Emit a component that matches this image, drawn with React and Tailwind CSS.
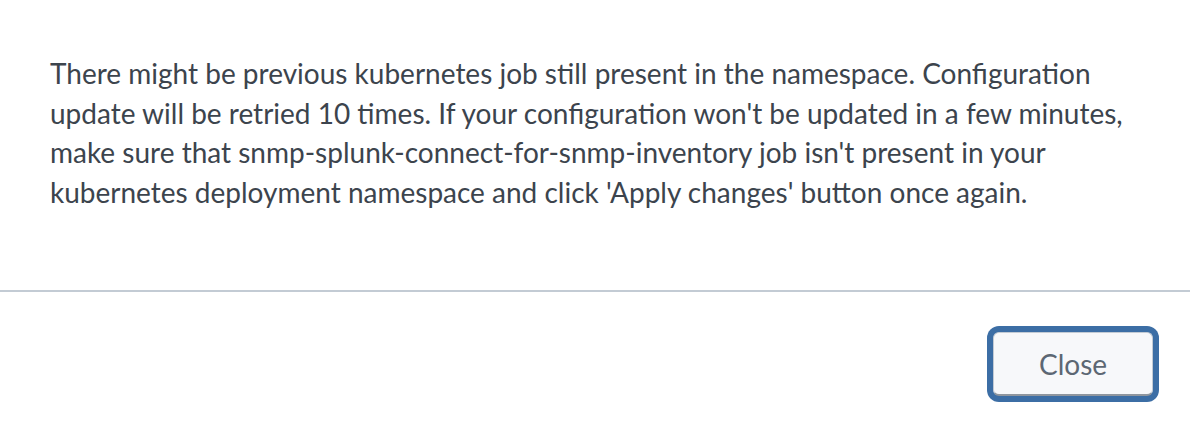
import React from 'react'

const LINES = [
  'There might be previous kubernetes job still present in the namespace. Configuration',
  "update will be retried 10 times. If your configuration won't be updated in a few minutes,",
  "make sure that snmp-splunk-connect-for-snmp-inventory job isn't present in your",
  "kubernetes deployment namespace and click 'Apply changes' button once again.",
]

export default function App() {
  return (
    <div
      className="w-[1190px] h-[430px] bg-white flex flex-col overflow-hidden"
      style={{ fontFamily: 'Lato, "Open Sans", sans-serif' }}
    >
      {/* Body */}
      <div className="h-[290px] pl-[50px] pt-[54px]">
        <p className="text-[28px] leading-[39.5px] text-[#3c444d] whitespace-nowrap">
          {LINES.map((l, i) => (
            <React.Fragment key={i}>
              {l}
              {i < LINES.length - 1 && <br />}
            </React.Fragment>
          ))}
        </p>
      </div>

      {/* Divider */}
      <div className="h-[2px] bg-[#c3cbd4]" />

      {/* Footer */}
      <div className="flex justify-end pr-[37px] pt-[40px]">
        <button
          className="w-[160px] h-[64px] rounded-[6px] bg-[#f7f8fa] border border-[#c3cbd4] border-b-2 border-b-[#8f969e] text-[28px] text-[#5c6773] shadow-[0_0_0_6px_#3c6ea5]"
        >
          Close
        </button>
      </div>
    </div>
  )
}
